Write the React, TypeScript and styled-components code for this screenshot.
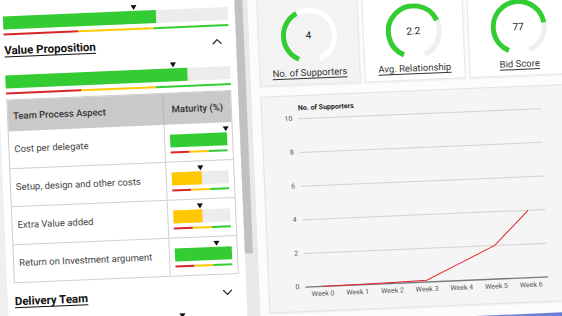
import React from 'react';
import styled, { createGlobalStyle } from 'styled-components';
import { ChevronUp, ChevronDown } from 'lucide-react';

const GREEN = '#33cc33';
const YELLOW = '#ffc800';
const RED = '#d9262b';

const GlobalStyle = createGlobalStyle`
  html, body {
    margin: 0;
    padding: 0;
    width: 562px;
    height: 316px;
    overflow: hidden;
    background: #efefef;
  }
  #root {
    width: 562px;
    height: 316px;
    overflow: hidden;
  }
  * { box-sizing: border-box; }
`;

type Row = { aspect: string; fill: number; marker: number; color: string };

const rows: Row[] = [
  { aspect: 'Cost per delegate', fill: 1, marker: 0.98, color: GREEN },
  { aspect: 'Setup, design and other costs', fill: 0.52, marker: 0.5, color: YELLOW },
  { aspect: 'Extra Value added', fill: 0.5, marker: 0.47, color: YELLOW },
  { aspect: 'Return on Investment argument', fill: 1, marker: 0.73, color: GREEN },
];

const gauges = [
  { label: 'No. of Supporters', value: '4', frac: 0.41, bg: '#f3f3f3', track: '#ffffff' },
  { label: 'Avg. Relationship', value: '2.2', frac: 0.71, bg: '#ffffff', track: '#efefef' },
  { label: 'Bid Score', value: '77', frac: 0.76, bg: '#ffffff', track: '#efefef' },
];

const weeks = ['Week 0', 'Week 1', 'Week 2', 'Week 3', 'Week 4', 'Week 5', 'Week 6'];
const supporters = [0, 0.03, 0.06, 0.1, 1.05, 2, 4];

const ProgressBar: React.FC<{ fill: number; marker: number; color: string; top?: number }> = ({
  fill,
  marker,
  color,
  top,
}) => (
  <BarBlock $top={top}>
    <MarkerTrack>
      <Marker style={{ left: `${marker * 100}%` }} />
    </MarkerTrack>
    <BarTrack>
      <BarFill $color={color} style={{ width: `${fill * 100}%` }} />
    </BarTrack>
    <Scale>
      <ScaleSeg $color={RED} />
      <ScaleSeg $color={YELLOW} />
      <ScaleSeg $color={GREEN} />
    </Scale>
  </BarBlock>
);

const START = 205;
const SPAN = 312;

const arcPath = (cx: number, cy: number, r: number, a0: number, a1: number) => {
  const pt = (a: number) => {
    const rad = (a * Math.PI) / 180;
    return `${(cx + r * Math.sin(rad)).toFixed(2)} ${(cy - r * Math.cos(rad)).toFixed(2)}`;
  };
  const large = a1 - a0 > 180 ? 1 : 0;
  return `M ${pt(a0)} A ${r} ${r} 0 ${large} 1 ${pt(a1)}`;
};

const Gauge: React.FC<{ frac: number; value: string; track: string }> = ({ frac, value, track }) => (
  <GaugeBox>
    <svg width="56" height="56" viewBox="0 0 56 56">
      <path d={arcPath(28, 28, 25.5, START, START + SPAN)} fill="none" stroke={track} strokeWidth="5" />
      <path d={arcPath(28, 28, 25.5, START, START + SPAN * frac)} fill="none" stroke={GREEN} strokeWidth="5" />
    </svg>
    <GaugeValue>{value}</GaugeValue>
  </GaugeBox>
);

const PLOT_L = 36;
const PLOT_R = 279;
const Y0 = 175;
const STEP = 33.68;
const band = (PLOT_R - PLOT_L) / 7;
const xAt = (i: number) => PLOT_L + band / 2 + band * i;
const yAt = (v: number) => Y0 - (v / 2) * STEP;

const SupportersChart: React.FC = () => (
  <svg width="100%" height="199">
    {[10, 8, 6, 4, 2].map((v) => (
      <g key={v}>
        <line x1={PLOT_L} x2={PLOT_R} y1={yAt(v)} y2={yAt(v)} stroke="#d2d2d2" strokeWidth="1" />
        <text x={30} y={yAt(v)} textAnchor="end" dominantBaseline="middle" fontSize="7" fill="#555">
          {v}
        </text>
      </g>
    ))}
    <line x1={PLOT_L} x2={PLOT_R} y1={Y0} y2={Y0} stroke="#777" strokeWidth="1.3" />
    <text x={30} y={Y0} textAnchor="end" dominantBaseline="middle" fontSize="7" fill="#555">
      0
    </text>
    {weeks.map((w, i) => (
      <text key={w} x={xAt(i)} y={182.5} textAnchor="middle" dominantBaseline="middle" fontSize="7" fill="#555">
        {w}
      </text>
    ))}
    <polyline
      points={supporters.map((v, i) => `${xAt(i).toFixed(1)},${yAt(v).toFixed(1)}`).join(' ')}
      fill="none"
      stroke="#e3262e"
      strokeWidth="1"
    />
  </svg>
);

const App: React.FC = () => {
  return (
    <>
      <GlobalStyle />
      <Stage>
        <LeftPanel>
          <ProgressBar fill={0.68} marker={0.58} color={GREEN} />

          <SectionHeader>
            <SectionTitle>Value Proposition</SectionTitle>
            <ChevronUp size={16} strokeWidth={1.8} color="#222" />
          </SectionHeader>
          <ProgressBar fill={0.81} marker={0.745} color={GREEN} top={4} />

          <Table>
            <HeaderRow>
              <HeadCell>Team Process Aspect</HeadCell>
              <HeadCell $center>Maturity (%)</HeadCell>
            </HeaderRow>
            {rows.map((r) => (
              <BodyRow key={r.aspect}>
                <AspectCell>{r.aspect}</AspectCell>
                <MaturityCell>
                  <ProgressBar fill={r.fill} marker={r.marker} color={r.color} />
                </MaturityCell>
              </BodyRow>
            ))}
          </Table>

          <SectionHeader $gap={3}>
            <SectionTitle>Delivery Team</SectionTitle>
            <ChevronDown size={16} strokeWidth={1.8} color="#222" />
          </SectionHeader>
          <ProgressBar fill={0.6} marker={0.74} color={GREEN} top={4} />
        </LeftPanel>

        <ScrollTrack>
          <ScrollThumb />
        </ScrollTrack>

        <RightArea>
          <CardRow>
            {gauges.map((g) => (
              <Card key={g.label} $bg={g.bg}>
                <Gauge frac={g.frac} value={g.value} track={g.track} />
                <CardLabel>{g.label}</CardLabel>
              </Card>
            ))}
          </CardRow>

          <ChartPanel>
            <ChartTitle>No. of Supporters</ChartTitle>
            <SupportersChart />
          </ChartPanel>

          <NextPanel />
        </RightArea>
      </Stage>
    </>
  );
};

export default App;

const Stage = styled.div`
  width: 620px;
  height: 380px;
  display: flex;
  padding-left: 22px;
  background: #efefef;
  font-family: Roboto, 'Liberation Sans', sans-serif;
  transform-origin: 301px 178px;
  transform: translate(-20px, -20px) rotate(-2.4deg);
`;

const LeftPanel = styled.div`
  width: 239px;
  flex-shrink: 0;
  background: #fff;
  padding: 19px 7px 0 7px;
`;

const BarBlock = styled.div<{ $top?: number }>`
  padding-top: ${(p) => p.$top ?? 0}px;
`;

const MarkerTrack = styled.div`
  position: relative;
  height: 5px;
  margin-bottom: 1px;
`;

const Marker = styled.div`
  position: absolute;
  top: 0;
  width: 0;
  height: 0;
  border-left: 3.5px solid transparent;
  border-right: 3.5px solid transparent;
  border-top: 5px solid #111;
  transform: translateX(-50%);
`;

const BarTrack = styled.div`
  height: 13px;
  background: #ececec;
`;

const BarFill = styled.div<{ $color: string }>`
  height: 100%;
  background: ${(p) => p.$color};
`;

const Scale = styled.div`
  display: flex;
  height: 2px;
  margin-top: 4px;
`;

const ScaleSeg = styled.div<{ $color: string }>`
  flex: 1;
  background: ${(p) => p.$color};
`;

const SectionHeader = styled.div<{ $gap?: number }>`
  height: 30px;
  margin-top: ${(p) => p.$gap ?? 0}px;
  display: flex;
  align-items: center;
  justify-content: space-between;
  padding-right: 4px;
`;

const SectionTitle = styled.span`
  font-size: 11.5px;
  font-weight: 700;
  color: #111;
  text-decoration: underline;
  text-underline-offset: 2px;
`;

const Table = styled.div`
  margin-top: 5px;
  border: 1px solid #cdcdcd;
  border-bottom: none;
`;

const HeaderRow = styled.div`
  display: grid;
  grid-template-columns: 155px 1fr;
  height: 31px;
  background: #c9c9c9;
`;

const HeadCell = styled.div<{ $center?: boolean }>`
  display: flex;
  align-items: center;
  justify-content: ${(p) => (p.$center ? 'center' : 'flex-start')};
  padding-left: ${(p) => (p.$center ? 0 : 5)}px;
  font-size: 9.5px;
  font-weight: 500;
  color: #333;
  & + & {
    border-left: 1px solid #b5b5b5;
  }
`;

const BodyRow = styled.div`
  display: grid;
  grid-template-columns: 155px 1fr;
  height: 38px;
  border-bottom: 1px solid #d0d0d0;
`;

const AspectCell = styled.div`
  display: flex;
  align-items: center;
  padding-left: 5px;
  padding-bottom: 3px;
  font-size: 9.5px;
  color: #444;
`;

const MaturityCell = styled.div`
  border-left: 1px solid #d0d0d0;
  padding: 4px 5px 0 5px;
`;

const ScrollTrack = styled.div`
  width: 13px;
  flex-shrink: 0;
  background: #e9e9e9;
`;

const ScrollThumb = styled.div`
  width: 8px;
  height: 272px;
  background: #c1c1c1;
`;

const RightArea = styled.div`
  flex: 1;
  background: #fcfcfc;
  padding: 12px 0 0 9px;
  display: flex;
  flex-direction: column;
`;

const CardRow = styled.div`
  display: grid;
  grid-template-columns: repeat(3, 101px);
  gap: 4px;
  height: 94px;
`;

const Card = styled.div<{ $bg: string }>`
  background: ${(p) => p.$bg};
  border: 1px solid #e7e7e7;
  box-shadow: 0 1px 2px rgba(0, 0, 0, 0.07);
  display: flex;
  flex-direction: column;
  align-items: center;
  padding-top: 15.5px;
`;

const GaugeBox = styled.div`
  position: relative;
  width: 56px;
  height: 56px;
`;

const GaugeValue = styled.div`
  position: absolute;
  inset: 0;
  display: flex;
  align-items: center;
  justify-content: center;
  font-size: 10px;
  color: #222;
`;

const CardLabel = styled.div`
  margin-top: 3px;
  line-height: 12px;
  font-size: 9.5px;
  color: #333;
  text-decoration: underline;
  text-underline-offset: 1.5px;
`;

const ChartPanel = styled.div`
  margin-top: 10px;
  height: 217px;
  background: #f5f5f5;
  border: 1px solid #e4e4e4;
  box-shadow: 0 1px 2px rgba(0, 0, 0, 0.06);
`;

const ChartTitle = styled.div`
  padding: 8px 0 0 36px;
  height: 16px;
  line-height: 8px;
  font-size: 7px;
  font-weight: 700;
  color: #222;
`;

const NextPanel = styled.div`
  margin-top: 11px;
  height: 20px;
  background: linear-gradient(to right, #9fb0e6, #5d76d0);
`;
